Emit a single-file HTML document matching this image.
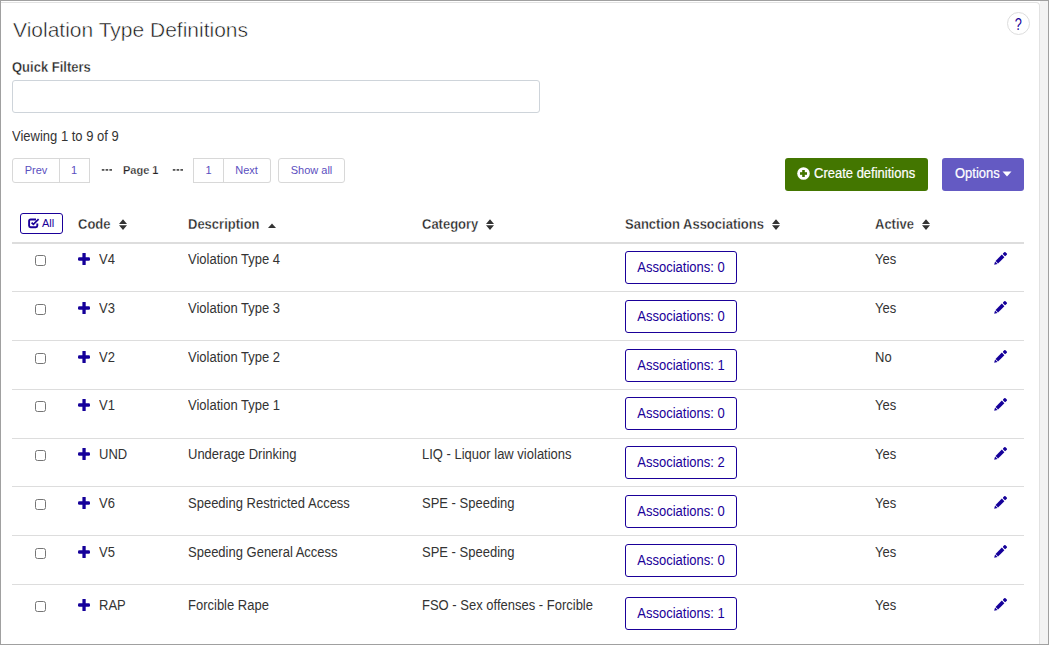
<!DOCTYPE html>
<html><head><meta charset="utf-8">
<style>
html,body{margin:0;padding:0;}
body{width:1049px;height:645px;overflow:hidden;position:relative;background:#fff;font-family:"Liberation Sans",sans-serif;color:#333;}
.frame-l{position:absolute;left:0;top:0;width:1px;height:645px;background:#a0a0a0;}
.frame-t{position:absolute;left:0;top:0;width:1049px;height:1px;background:#a0a0a0;}
.frame-r{position:absolute;right:0;top:0;width:1px;height:645px;background:#a0a0a0;}
.frame-b{position:absolute;left:0;bottom:0;width:1049px;height:1px;background:#a0a0a0;}
.side{position:absolute;left:1040px;top:1px;width:8px;height:643px;background:#f3f3f3;}
.card{position:absolute;left:1px;top:2px;width:1038px;height:660px;border-top:1px solid #e2e2e2;border-right:1px solid #e2e2e2;border-top-right-radius:4px;background:#fff;}
.abs{position:absolute;white-space:nowrap;}
.title{left:13px;top:18px;font-size:21px;color:#111;-webkit-text-stroke:0.5px #fff;}
.qf{left:12px;top:60px;font-size:13px;font-weight:bold;color:#222;-webkit-text-stroke:0.3px #fff;transform:scaleY(1.1);transform-origin:0 12px;}
.input{left:12px;top:80px;width:526px;height:31px;border:1px solid #ced4da;border-radius:3px;}
.viewing{left:12px;top:129px;font-size:13px;color:#333;transform:scaleY(1.1);transform-origin:0 12px;}
.pg{position:absolute;top:158px;height:23px;border:1px solid #d8d8d8;font-size:11px;color:#5b4fc0;line-height:23px;text-align:center;box-sizing:content-box;}
.dash{top:163px;font-size:11px;font-weight:bold;color:#333;}
.help{left:1007px;top:12px;width:21px;height:21px;border:1px solid #ddd;border-radius:50%;text-align:center;line-height:22px;font-size:15px;color:#1a0099;}
.btn{position:absolute;top:158px;height:33px;border-radius:3px;color:#fff;font-size:13px;line-height:33px;}
.bt{position:absolute;top:-1px;white-space:nowrap;transform:scaleY(1.1);transform-origin:0 21px;-webkit-text-stroke:0.2px #fff;}
.hdr{position:absolute;top:217px;font-size:13px;font-weight:bold;color:#222;white-space:nowrap;transform:scaleY(1.1);transform-origin:0 12px;-webkit-text-stroke:0.3px #fff;}
.sort{position:absolute;right:-16px;top:3px;}
.hline{position:absolute;left:12px;top:242px;width:1012px;height:2px;background:#ddd;}
.rline{position:absolute;left:12px;width:1012px;height:1px;background:#ddd;}
.cell{position:absolute;font-size:14px;color:#333;white-space:nowrap;}
.row{position:absolute;left:0;width:1040px;height:48px;}
.cb{position:absolute;left:35px;top:11px;margin:0;width:11px;height:11px;}
.c{position:absolute;top:8px;font-size:13px;color:#333;white-space:nowrap;transform:scaleY(1.1);transform-origin:0 12px;}
.code{left:99px;}.desc{left:188px;}.cat{left:422px;}.act{left:875px;}
.plus{position:absolute;left:78px;top:9px;width:12px;height:12px;}
.assoc{position:absolute;left:625px;top:7px;width:110px;height:31px;border:1.5px solid #1a0099;border-radius:3px;font-size:13px;color:#1a0099;text-align:center;line-height:31px;}
.at{display:inline-block;transform:scaleY(1.1);}
.pen{position:absolute;left:993px;top:6px;width:16px;height:16px;}
</style></head><body>
<div class="side"></div>
<div class="card"></div>
<div class="abs title">Violation Type Definitions</div>
<div class="abs help"><span style="display:inline-block;transform:scale(0.85,1.1);position:relative;top:0px;">?</span></div>
<div class="abs qf">Quick Filters</div>
<div class="abs input"></div>
<div class="abs viewing">Viewing 1 to 9 of 9</div>

<div class="pg" style="left:12px;width:46px;border-radius:3px 0 0 3px;">Prev</div>
<div class="pg" style="left:59px;width:30px;border-left:none;border-radius:0;">1</div>
<svg class="abs" style="left:101px;top:168px" width="12" height="4" viewBox="0 0 12 4"><rect x="0.8" y="1" width="2.6" height="1.8" fill="#555"/><rect x="4.6" y="1" width="2.6" height="1.8" fill="#555"/><rect x="8.4" y="1" width="2.6" height="1.8" fill="#555"/></svg>
<div class="abs" style="left:123px;top:164px;font-size:11px;font-weight:bold;color:#222;-webkit-text-stroke:0.25px #fff;">Page 1</div>
<svg class="abs" style="left:172px;top:168px" width="12" height="4" viewBox="0 0 12 4"><rect x="0.8" y="1" width="2.6" height="1.8" fill="#555"/><rect x="4.6" y="1" width="2.6" height="1.8" fill="#555"/><rect x="8.4" y="1" width="2.6" height="1.8" fill="#555"/></svg>
<div class="pg" style="left:193px;width:29px;border-radius:0;">1</div>
<div class="pg" style="left:223px;width:47px;border-left:none;border-radius:0 3px 3px 0;">Next</div>
<div class="pg" style="left:278px;width:65px;border-radius:3px;">Show all</div>

<div class="btn" style="left:785px;width:143px;background:#437600;"><svg style="position:absolute;left:11.5px;top:9px" width="13" height="13" viewBox="0 0 13 13"><circle cx="6.5" cy="6.5" r="6.3" fill="#fff"/><rect x="5.2" y="3" width="2.6" height="7" fill="#437600"/><rect x="3" y="5.2" width="7" height="2.6" fill="#437600"/></svg><span class="bt" style="left:29px;">Create definitions</span></div>
<div class="btn" style="left:942px;width:82px;background:#645ac3;"><span class="bt" style="left:13px;">Options</span><svg style="position:absolute;left:60px;top:13px" width="10" height="6" viewBox="0 0 10 6"><path d="M0.5 0.5 L9.5 0.5 L5 5.5 Z" fill="#fff"/></svg></div>

<div class="abs" style="left:20px;top:213px;width:41px;height:19px;border:1px solid #1a0099;border-radius:3px;font-size:11px;color:#1a0099;line-height:19px;"><svg style="position:absolute;left:7px;top:3.5px" width="12" height="11" viewBox="0 0 12 11"><path d="M9.3 5.4 V7.8 Q9.3 9.2 7.8 9.2 H2.6 Q1.1 9.2 1.1 7.8 V3 Q1.1 1.5 2.6 1.5 H8" fill="none" stroke="#1a0099" stroke-width="1.9"/><path d="M3.6 4.6 L5.4 6.4 L10.6 1.2" fill="none" stroke="#1a0099" stroke-width="1.7"/></svg><span style="position:absolute;left:21px;top:0;">All</span></div>
<div class="hdr" style="left:78px;">Code<svg class="sort" width="8" height="10" viewBox="0 0 8 10"><path d="M0 4.5 L4 0.2 L8 4.5 Z M0 5.6 L4 9.9 L8 5.6 Z" fill="#333"/></svg></div>
<div class="hdr" style="left:188px;">Description<svg class="sort" width="8" height="10" viewBox="0 0 8 10"><path d="M0 8 L4 4 L8 8 Z" fill="#333"/></svg></div>
<div class="hdr" style="left:422px;">Category<svg class="sort" width="8" height="10" viewBox="0 0 8 10"><path d="M0 4.5 L4 0.2 L8 4.5 Z M0 5.6 L4 9.9 L8 5.6 Z" fill="#333"/></svg></div>
<div class="hdr" style="left:625px;">Sanction Associations<svg class="sort" width="8" height="10" viewBox="0 0 8 10"><path d="M0 4.5 L4 0.2 L8 4.5 Z M0 5.6 L4 9.9 L8 5.6 Z" fill="#333"/></svg></div>
<div class="hdr" style="left:875px;">Active<svg class="sort" width="8" height="10" viewBox="0 0 8 10"><path d="M0 4.5 L4 0.2 L8 4.5 Z M0 5.6 L4 9.9 L8 5.6 Z" fill="#333"/></svg></div>
<div class="hline"></div>

<!--ROWS-->
<div class="rline" style="top:291px"></div>
<div class="rline" style="top:340px"></div>
<div class="rline" style="top:389px"></div>
<div class="rline" style="top:438px"></div>
<div class="rline" style="top:486px"></div>
<div class="rline" style="top:535px"></div>
<div class="rline" style="top:584px"></div>
<div class="row" style="top:244px"><input type="checkbox" class="cb"><svg class="plus" viewBox="0 0 12 12"><rect x="4.4" y="0" width="3.3" height="12" rx="0.6" fill="#15009a"/><rect x="0" y="4.2" width="12" height="3.6" rx="1.3" fill="#15009a"/></svg><span class="c code">V4</span><span class="c desc">Violation Type 4</span><span class="c cat"></span><span class="assoc"><span class="at">Associations: 0</span></span><span class="c act">Yes</span><svg class="pen" viewBox="0 0 16 16"><g transform="translate(1.2,14.8) rotate(-45)" fill="#15009a"><path d="M0 0 L3 -1.8 L3 1.8 Z"/><rect x="3.7" y="-1.8" width="8.9" height="3.6"/><rect x="13.6" y="-1.8" width="3.3" height="3.6" rx="0.9"/></g></svg></div>
<div class="row" style="top:293px"><input type="checkbox" class="cb"><svg class="plus" viewBox="0 0 12 12"><rect x="4.4" y="0" width="3.3" height="12" rx="0.6" fill="#15009a"/><rect x="0" y="4.2" width="12" height="3.6" rx="1.3" fill="#15009a"/></svg><span class="c code">V3</span><span class="c desc">Violation Type 3</span><span class="c cat"></span><span class="assoc"><span class="at">Associations: 0</span></span><span class="c act">Yes</span><svg class="pen" viewBox="0 0 16 16"><g transform="translate(1.2,14.8) rotate(-45)" fill="#15009a"><path d="M0 0 L3 -1.8 L3 1.8 Z"/><rect x="3.7" y="-1.8" width="8.9" height="3.6"/><rect x="13.6" y="-1.8" width="3.3" height="3.6" rx="0.9"/></g></svg></div>
<div class="row" style="top:342px"><input type="checkbox" class="cb"><svg class="plus" viewBox="0 0 12 12"><rect x="4.4" y="0" width="3.3" height="12" rx="0.6" fill="#15009a"/><rect x="0" y="4.2" width="12" height="3.6" rx="1.3" fill="#15009a"/></svg><span class="c code">V2</span><span class="c desc">Violation Type 2</span><span class="c cat"></span><span class="assoc"><span class="at">Associations: 1</span></span><span class="c act">No</span><svg class="pen" viewBox="0 0 16 16"><g transform="translate(1.2,14.8) rotate(-45)" fill="#15009a"><path d="M0 0 L3 -1.8 L3 1.8 Z"/><rect x="3.7" y="-1.8" width="8.9" height="3.6"/><rect x="13.6" y="-1.8" width="3.3" height="3.6" rx="0.9"/></g></svg></div>
<div class="row" style="top:390px"><input type="checkbox" class="cb"><svg class="plus" viewBox="0 0 12 12"><rect x="4.4" y="0" width="3.3" height="12" rx="0.6" fill="#15009a"/><rect x="0" y="4.2" width="12" height="3.6" rx="1.3" fill="#15009a"/></svg><span class="c code">V1</span><span class="c desc">Violation Type 1</span><span class="c cat"></span><span class="assoc"><span class="at">Associations: 0</span></span><span class="c act">Yes</span><svg class="pen" viewBox="0 0 16 16"><g transform="translate(1.2,14.8) rotate(-45)" fill="#15009a"><path d="M0 0 L3 -1.8 L3 1.8 Z"/><rect x="3.7" y="-1.8" width="8.9" height="3.6"/><rect x="13.6" y="-1.8" width="3.3" height="3.6" rx="0.9"/></g></svg></div>
<div class="row" style="top:439px"><input type="checkbox" class="cb"><svg class="plus" viewBox="0 0 12 12"><rect x="4.4" y="0" width="3.3" height="12" rx="0.6" fill="#15009a"/><rect x="0" y="4.2" width="12" height="3.6" rx="1.3" fill="#15009a"/></svg><span class="c code">UND</span><span class="c desc">Underage Drinking</span><span class="c cat">LIQ - Liquor law violations</span><span class="assoc"><span class="at">Associations: 2</span></span><span class="c act">Yes</span><svg class="pen" viewBox="0 0 16 16"><g transform="translate(1.2,14.8) rotate(-45)" fill="#15009a"><path d="M0 0 L3 -1.8 L3 1.8 Z"/><rect x="3.7" y="-1.8" width="8.9" height="3.6"/><rect x="13.6" y="-1.8" width="3.3" height="3.6" rx="0.9"/></g></svg></div>
<div class="row" style="top:488px"><input type="checkbox" class="cb"><svg class="plus" viewBox="0 0 12 12"><rect x="4.4" y="0" width="3.3" height="12" rx="0.6" fill="#15009a"/><rect x="0" y="4.2" width="12" height="3.6" rx="1.3" fill="#15009a"/></svg><span class="c code">V6</span><span class="c desc">Speeding Restricted Access</span><span class="c cat">SPE - Speeding</span><span class="assoc"><span class="at">Associations: 0</span></span><span class="c act">Yes</span><svg class="pen" viewBox="0 0 16 16"><g transform="translate(1.2,14.8) rotate(-45)" fill="#15009a"><path d="M0 0 L3 -1.8 L3 1.8 Z"/><rect x="3.7" y="-1.8" width="8.9" height="3.6"/><rect x="13.6" y="-1.8" width="3.3" height="3.6" rx="0.9"/></g></svg></div>
<div class="row" style="top:537px"><input type="checkbox" class="cb"><svg class="plus" viewBox="0 0 12 12"><rect x="4.4" y="0" width="3.3" height="12" rx="0.6" fill="#15009a"/><rect x="0" y="4.2" width="12" height="3.6" rx="1.3" fill="#15009a"/></svg><span class="c code">V5</span><span class="c desc">Speeding General Access</span><span class="c cat">SPE - Speeding</span><span class="assoc"><span class="at">Associations: 0</span></span><span class="c act">Yes</span><svg class="pen" viewBox="0 0 16 16"><g transform="translate(1.2,14.8) rotate(-45)" fill="#15009a"><path d="M0 0 L3 -1.8 L3 1.8 Z"/><rect x="3.7" y="-1.8" width="8.9" height="3.6"/><rect x="13.6" y="-1.8" width="3.3" height="3.6" rx="0.9"/></g></svg></div>
<div class="row" style="top:590px"><input type="checkbox" class="cb"><svg class="plus" viewBox="0 0 12 12"><rect x="4.4" y="0" width="3.3" height="12" rx="0.6" fill="#15009a"/><rect x="0" y="4.2" width="12" height="3.6" rx="1.3" fill="#15009a"/></svg><span class="c code">RAP</span><span class="c desc">Forcible Rape</span><span class="c cat">FSO - Sex offenses - Forcible</span><span class="assoc"><span class="at">Associations: 1</span></span><span class="c act">Yes</span><svg class="pen" viewBox="0 0 16 16"><g transform="translate(1.2,14.8) rotate(-45)" fill="#15009a"><path d="M0 0 L3 -1.8 L3 1.8 Z"/><rect x="3.7" y="-1.8" width="8.9" height="3.6"/><rect x="13.6" y="-1.8" width="3.3" height="3.6" rx="0.9"/></g></svg></div>
<!--/ROWS-->
<div class="frame-l"></div><div class="frame-t"></div><div class="frame-r"></div><div class="frame-b"></div>
</body></html>
